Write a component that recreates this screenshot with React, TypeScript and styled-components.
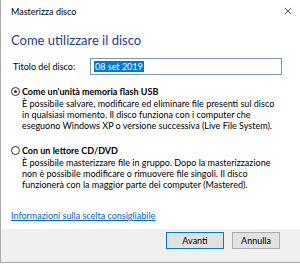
import React from 'react';
import styled, { createGlobalStyle } from 'styled-components';

const GlobalStyle = createGlobalStyle`
    html, body {
        margin: 0;
        padding: 0;
        background: #ffffff;
    }
    body {
        font-family: Lato, "Open Sans", sans-serif;
        color: #000000;
    }
`;

interface OptionData {
    label: string;
    lines: string[];
    checked: boolean;
}

const options: OptionData[] = [
    {
        label: "Come un'unità memoria flash USB",
        lines: [
            "È possibile salvare, modificare ed eliminare file presenti sul disco",
            "in qualsiasi momento. Il disco funziona con i computer che",
            "eseguono Windows XP o versione successiva (Live File System).",
        ],
        checked: true,
    },
    {
        label: "Con un lettore CD/DVD",
        lines: [
            "È possibile masterizzare file in gruppo. Dopo la masterizzazione",
            "non è possibile modificare o rimuovere file singoli. Il disco",
            "funzionerà con la maggior parte dei computer (Mastered).",
        ],
        checked: false,
    },
];

const App: React.FC = () => {
    return (
        <>
            <GlobalStyle />
            <Window>
                <TitleBar>
                    <TitleText>Masterizza disco</TitleText>
                    <CloseIcon viewBox="0 0 10 10">
                        <path d="M1 1 L9 9 M9 1 L1 9" stroke="#333" strokeWidth="1" fill="none" />
                    </CloseIcon>
                </TitleBar>
                <Content>
                    <Heading>Come utilizzare il disco</Heading>
                    <FieldRow>
                        <FieldLabel>Titolo del disco:</FieldLabel>
                        <TextBox>
                            <Selected>08 set 2019</Selected>
                        </TextBox>
                    </FieldRow>
                    {options.map((option, index) => (
                        <Option key={index} first={index == 0}>
                            <RadioRow>
                                <Radio checked={option.checked} />
                                <OptionLabel>{option.label}</OptionLabel>
                            </RadioRow>
                            <Description>
                                {option.lines.map((line, i) => (
                                    <Line key={i}>{line}</Line>
                                ))}
                            </Description>
                        </Option>
                    ))}
                    <HelpLink>Informazioni sulla scelta consigliabile</HelpLink>
                </Content>
                <Footer>
                    <Button isDefault={true} width={58}>Avanti</Button>
                    <Button isDefault={false} width={48}>Annulla</Button>
                </Footer>
            </Window>
        </>
    );
};
export default App;

const Window = styled.div`
    width: 299px;
    height: 263px;
    border-left: 1px solid #a9a9a9;
    display: flex;
    flex-direction: column;
    background: #ffffff;
`;

const TitleBar = styled.div`
    height: 22px;
    display: flex;
    align-items: center;
    justify-content: space-between;
    padding: 0 8px 0 10px;
`;

const TitleText = styled.span`
    font-size: 9px;
    color: #000;
`;

const CloseIcon = styled.svg`
    width: 8px;
    height: 8px;
`;

const Content = styled.div`
    flex: 1;
    padding: 0 10px;
`;

const Heading = styled.div`
    margin-top: 9px;
    font-size: 13px;
    line-height: 18px;
    color: #1e3c8c;
`;

const FieldRow = styled.div`
    display: flex;
    align-items: center;
    margin-top: 9px;
    height: 17px;
`;

const FieldLabel = styled.span`
    font-size: 9px;
    width: 77px;
    padding-left: 2px;
`;

const TextBox = styled.div`
    width: 187px;
    height: 15px;
    border: 1px solid #7a9ab5;
    display: flex;
    align-items: center;
    padding-left: 3px;
`;

const Selected = styled.span`
    background: #0078d7;
    color: #ffffff;
    font-size: 9px;
    line-height: 11px;
    padding: 0 1px;
`;

const Option = styled.div<{ first: boolean }>`
    margin-top: ${props => props.first ? 10 : 13}px;
`;

const RadioRow = styled.div`
    display: flex;
    align-items: center;
    height: 13px;
`;

const Radio = styled.span<{ checked: boolean }>`
    width: 7px;
    height: 7px;
    border: 1px solid #333;
    border-radius: 50%;
    margin-right: 2px;
    display: flex;
    align-items: center;
    justify-content: center;
    &::after {
        content: "";
        width: 3px;
        height: 3px;
        border-radius: 50%;
        background: ${props => props.checked ? "#333" : "transparent"};
    }
`;

const OptionLabel = styled.span`
    font-size: 9px;
    font-weight: 700;
`;

const Description = styled.div`
    padding-left: 11px;
    font-size: 9px;
    white-space: nowrap;
`;

const Line = styled.div`
    height: 11px;
    line-height: 11px;
`;

const HelpLink = styled.div`
    margin-top: 20px;
    font-size: 9px;
    line-height: 11px;
    color: #0066cc;
    text-decoration: underline;
`;

const Footer = styled.div`
    height: 34px;
    background: #f0f0f0;
    border-bottom: 1px solid #a9a9a9;
    display: flex;
    justify-content: flex-end;
    align-items: flex-start;
    gap: 8px;
    padding: 3px 20px 0 0;
    box-sizing: border-box;
`;

const Button = styled.div<{ isDefault: boolean; width: number }>`
    width: ${props => props.width}px;
    height: 17px;
    box-sizing: border-box;
    background: #e1e1e1;
    border: 1px solid ${props => props.isDefault ? "#0078d7" : "#adadad"};
    font-size: 9px;
    display: flex;
    align-items: center;
    justify-content: center;
`;
